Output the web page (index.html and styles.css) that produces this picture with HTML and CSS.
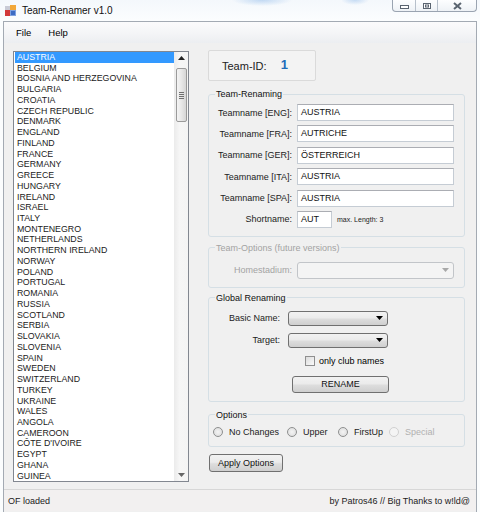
FILE: index.html
```html
<!DOCTYPE html>
<html>
<head>
<meta charset="utf-8">
<title>Team-Renamer v1.0</title>
<link rel="stylesheet" href="styles.css">
</head>
<body>
<div class="titlebar">
  <svg class="appicon" width="11" height="11" viewBox="0 0 11 11">
    <rect x="0" y="1" width="5" height="4" fill="#c9cbd6"/>
    <rect x="5" y="0" width="6" height="5" fill="#f2a83a"/>
    <rect x="0" y="5" width="5" height="6" fill="#d2393a"/>
    <rect x="5" y="5" width="6" height="6" fill="#3d6cc4"/>
    <rect x="5.5" y="5.5" width="5" height="5" fill="none" stroke="#7fa2e0" stroke-width="1"/>
  </svg>
  <span class="title">Team-Renamer v1.0</span>
  <div class="caption">
    <div class="cbtn cmin"><svg width="9" height="5" viewBox="0 0 9 5"><rect x="0.5" y="0.5" width="8" height="3" fill="#fff" stroke="#5a6470"/></svg></div>
    <div class="cbtn cmax"><svg width="8" height="6" viewBox="0 0 8 6"><rect x="0.5" y="0.5" width="7" height="5" fill="#fff" stroke="#5a6470"/><rect x="2.5" y="2" width="3" height="2" fill="none" stroke="#5a6470"/></svg></div>
    <div class="cbtn cclose"><svg width="9" height="8" viewBox="0 0 9 8"><path d="M1 1 L8 7 M8 1 L1 7" stroke="#5a6470" stroke-width="2"/></svg></div>
  </div>
</div>
<div class="client">
  <div class="menubar">
    <span class="menuitem">File</span>
    <span class="menuitem">Help</span>
  </div>
  <div class="main">
    <div class="listbox">
      <div class="items">
        <div class="item sel">AUSTRIA</div>
        <div class="item">BELGIUM</div>
        <div class="item">BOSNIA AND HERZEGOVINA</div>
        <div class="item">BULGARIA</div>
        <div class="item">CROATIA</div>
        <div class="item">CZECH REPUBLIC</div>
        <div class="item">DENMARK</div>
        <div class="item">ENGLAND</div>
        <div class="item">FINLAND</div>
        <div class="item">FRANCE</div>
        <div class="item">GERMANY</div>
        <div class="item">GREECE</div>
        <div class="item">HUNGARY</div>
        <div class="item">IRELAND</div>
        <div class="item">ISRAEL</div>
        <div class="item">ITALY</div>
        <div class="item">MONTENEGRO</div>
        <div class="item">NETHERLANDS</div>
        <div class="item">NORTHERN IRELAND</div>
        <div class="item">NORWAY</div>
        <div class="item">POLAND</div>
        <div class="item">PORTUGAL</div>
        <div class="item">ROMANIA</div>
        <div class="item">RUSSIA</div>
        <div class="item">SCOTLAND</div>
        <div class="item">SERBIA</div>
        <div class="item">SLOVAKIA</div>
        <div class="item">SLOVENIA</div>
        <div class="item">SPAIN</div>
        <div class="item">SWEDEN</div>
        <div class="item">SWITZERLAND</div>
        <div class="item">TURKEY</div>
        <div class="item">UKRAINE</div>
        <div class="item">WALES</div>
        <div class="item">ANGOLA</div>
        <div class="item">CAMEROON</div>
        <div class="item">CÔTE D'IVOIRE</div>
        <div class="item">EGYPT</div>
        <div class="item">GHANA</div>
        <div class="item">GUINEA</div>
      </div>
      <div class="vscroll">
        <div class="arrow"><svg width="7" height="4" viewBox="0 0 7 4"><path d="M0 4 L3.5 0 L7 4 Z" fill="#222"/></svg></div>
        <div class="track">
          <div class="thumb"><span class="grip"></span><span class="grip"></span><span class="grip"></span><span class="grip"></span></div>
        </div>
        <div class="arrow"><svg width="7" height="4" viewBox="0 0 7 4"><path d="M0 0 L3.5 4 L7 0 Z" fill="#666"/></svg></div>
      </div>
    </div>
    <div class="right">
      <div class="idbox">
        <span class="idlabel">Team-ID:</span>
        <span class="idval">1</span>
      </div>
      <fieldset class="group g-rename">
        <legend>Team-Renaming</legend>
        <div class="formgrid">
          <label class="lbl">Teamname [ENG]:</label><div class="tb">AUSTRIA</div>
          <label class="lbl">Teamname [FRA]:</label><div class="tb">AUTRICHE</div>
          <label class="lbl">Teamname [GER]:</label><div class="tb">ÖSTERREICH</div>
          <label class="lbl">Teamname [ITA]:</label><div class="tb">AUSTRIA</div>
          <label class="lbl">Teamname [SPA]:</label><div class="tb">AUSTRIA</div>
          <label class="lbl">Shortname:</label>
          <div class="shortrow"><div class="tb tb-short">AUT</div><span class="hint">max. Length: 3</span></div>
        </div>
      </fieldset>
      <fieldset class="group g-options disabled">
        <legend>Team-Options (future versions)</legend>
        <div class="formgrid">
          <label class="lbl">Homestadium:</label>
          <div class="combo combo-dis"><svg width="7" height="4" viewBox="0 0 7 4"><path d="M0 0 L3.5 4 L7 0 Z" fill="#a8a8a8"/></svg></div>
        </div>
      </fieldset>
      <fieldset class="group g-global">
        <legend>Global Renaming</legend>
        <div class="globalgrid">
          <label class="lbl">Basic Name:</label>
          <div class="combo"><svg width="7" height="4" viewBox="0 0 7 4"><path d="M0 0 L3.5 4 L7 0 Z" fill="#000"/></svg></div>
          <label class="lbl">Target:</label>
          <div class="combo"><svg width="7" height="4" viewBox="0 0 7 4"><path d="M0 0 L3.5 4 L7 0 Z" fill="#000"/></svg></div>
        </div>
        <div class="checkrow"><span class="check"></span><span>only club names</span></div>
        <div class="btn btn-rename">RENAME</div>
      </fieldset>
      <fieldset class="group g-case">
        <legend>Options</legend>
        <div class="radiorow">
          <span class="ropt o1"><span class="radio"></span>No Changes</span>
          <span class="ropt o2"><span class="radio"></span>Upper</span>
          <span class="ropt o3"><span class="radio"></span>FirstUp</span>
          <span class="ropt o4 dis"><span class="radio"></span>Special</span>
        </div>
      </fieldset>
      <div class="btn btn-apply">Apply Options</div>
    </div>
  </div>
  <div class="statusbar">
    <span>OF loaded</span>
    <span>by Patros46 // Big Thanks to w!ld@</span>
  </div>
</div>
</body>
</html>
```
FILE: styles.css
```css
html, body {
  margin: 0;
  padding: 0;
}
body {
  width: 480px;
  height: 512px;
  overflow: hidden;
  font-family: "Liberation Sans", Arial, sans-serif;
  font-size: 9px;
  color: #000;
  background:
    radial-gradient(ellipse 30px 6px at 262px 0px, rgba(150,190,235,0.55), rgba(150,190,235,0) 100%),
    radial-gradient(ellipse 14px 5px at 355px 0px, rgba(150,190,235,0.5), rgba(150,190,235,0) 100%),
    linear-gradient(#f4f8fc, #fbfdfe 20px);
}

/* title bar */
.titlebar {
  height: 21px;
  display: flex;
  align-items: center;
  position: relative;
}
.appicon {
  margin-left: 5px;
  margin-top: -1px;
}
.title {
  margin-left: 6px;
  font-size: 10px;
  color: #111;
  margin-top: -1px;
}
.caption {
  margin-left: auto;
  margin-right: 3px;
  align-self: flex-start;
  display: flex;
  height: 11px;
  border: 1px solid #9aa4b1;
  border-top: none;
  border-radius: 0 0 4px 4px;
  background: linear-gradient(#fdfeff, #eef2f6);
  overflow: hidden;
}
.cbtn {
  display: flex;
  align-items: center;
  justify-content: center;
  height: 11px;
}
.cmin { width: 22px; border-right: 1px solid #b7c0cb; }
.cmin svg { margin-top: 3px; }
.cmax { width: 21px; border-right: 1px solid #b7c0cb; }
.cclose { width: 38px; }

/* client */
.client {
  margin-left: 3px;
  width: 472px;
  height: 490px;
  border: 1px solid #a3aab3;
  border-bottom: none;
  background: #f0f0f0;
  display: flex;
  flex-direction: column;
}
.menubar {
  height: 21px;
  flex: none;
  display: flex;
  align-items: center;
  padding-left: 12px;
  gap: 17px;
  background: linear-gradient(#fbfbfc, #f3f4f6 60%, #eceef1);
}
.menuitem {
  font-size: 9.5px;
}

.main {
  height: 446px;
  flex: none;
  display: flex;
  align-items: flex-start;
  padding-left: 9px;
  box-sizing: border-box;
}

/* listbox */
.listbox {
  margin-top: 8px;
  width: 176px;
  height: 431px;
  box-sizing: border-box;
  border: 1px solid #828790;
  background: #fff;
  display: flex;
  overflow: hidden;
}
.items {
  flex: 1;
  overflow: hidden;
}
.item {
  height: 10.74px;
  line-height: 10.74px;
  padding-left: 2px;
  margin: 0 0 0 1px;
  font-size: 8.8px;
  color: #1b1b1b;
  white-space: nowrap;
}
.item.sel {
  background: #3399ff;
  color: #fff;
}
.vscroll {
  width: 14px;
  flex: none;
  display: flex;
  flex-direction: column;
  background: linear-gradient(90deg, #ebebeb, #f6f6f6 40%, #f4f4f4);
}
.arrow {
  height: 12px;
  flex: none;
  display: flex;
  align-items: center;
  justify-content: center;
}
.track {
  flex: 1;
  padding: 4px 1px 0 2px;
}
.thumb {
  height: 54px;
  box-sizing: border-box;
  border: 1px solid #9a9a9a;
  border-radius: 2px;
  background: linear-gradient(90deg, #f4f4f4, #e7e7e7 50%, #d6d6d6);
  display: flex;
  flex-direction: column;
  align-items: center;
  justify-content: center;
  gap: 1px;
}
.grip {
  width: 5px;
  height: 1px;
  background: #6f6f6f;
}

/* right column */
.right {
  margin-left: 19px;
  width: 257px;
  padding-top: 7px;
}
.idbox {
  width: 108px;
  height: 31px;
  box-sizing: border-box;
  border: 1px solid #dadada;
  border-radius: 2px;
  background: #f3f3f3;
  display: flex;
  align-items: center;
  padding-left: 13px;
}
.idlabel {
  font-size: 11px;
  color: #222;
}
.idval {
  margin-left: 14px;
  font-size: 13px;
  font-weight: bold;
  color: #1f6cba;
  margin-top: -2px;
}

.group {
  margin: 0;
  min-width: 0;
  border: 1px solid #d5dfe5;
  border-radius: 3px;
  padding: 4px 6px 8px 6px;
  box-sizing: border-box;
  width: 257px;
}
.group legend {
  padding: 0 1px;
  font-size: 9px;
  line-height: 12px;
  color: #111;
}
.g-rename { margin-top: 7px; }
.g-options { margin-top: 5px; padding-top: 8px; }
.g-global { margin-top: 4px; padding-top: 7px; }
.g-case { margin-top: 7px; padding-top: 4px; padding-bottom: 7px; }

.disabled legend, .disabled .lbl { color: #a3a3a3; }

.formgrid {
  display: grid;
  grid-template-columns: 77px 157px;
  column-gap: 5px;
  row-gap: 4.4px;
  align-items: center;
}
.lbl {
  text-align: right;
  color: #222;
  white-space: nowrap;
}
.tb {
  height: 17px;
  box-sizing: border-box;
  border: 1px solid #c5ccd4;
  border-top-color: #abadb3;
  background: #fff;
  padding-left: 3px;
  line-height: 15px;
  color: #111;
}
.shortrow {
  display: flex;
  align-items: center;
}
.tb-short { width: 35px; }
.hint {
  margin-left: 5px;
  font-size: 7px;
  color: #222;
  margin-top: 1px;
}

.combo {
  height: 15px;
  box-sizing: border-box;
  border: 1px solid #707070;
  border-radius: 3px;
  background: linear-gradient(#f2f2f2, #ebebeb 45%, #dddddd 55%, #cfcfcf);
  display: flex;
  align-items: center;
  justify-content: flex-end;
  padding-right: 4px;
}
.combo-dis {
  height: 17px;
  border-color: #c2c5c9;
  background: #f4f4f4;
}

.globalgrid {
  display: grid;
  grid-template-columns: 65px 100px;
  column-gap: 8px;
  row-gap: 7px;
  align-items: center;
}
.checkrow {
  margin-top: 8px;
  margin-left: 90px;
  display: flex;
  align-items: center;
  gap: 4px;
  height: 11px;
}
.check {
  width: 10px;
  height: 10px;
  box-sizing: border-box;
  border: 1px solid #8f8f8f;
  background: linear-gradient(135deg, #dcdcdc, #fafafa);
}
.btn {
  box-sizing: border-box;
  border: 1px solid #707070;
  border-radius: 3px;
  background: linear-gradient(#f2f2f2, #ebebeb 45%, #dddddd 55%, #cfcfcf);
  display: flex;
  align-items: center;
  justify-content: center;
  color: #111;
}
.btn-rename {
  margin-top: 9px;
  margin-left: 77px;
  width: 97px;
  height: 17px;
}
.btn-apply {
  margin-top: 7px;
  margin-left: 1px;
  width: 74px;
  height: 18px;
}

.radiorow {
  display: flex;
  align-items: center;
  height: 14px;
  margin-left: -2px;
}
.ropt {
  display: flex;
  align-items: center;
  gap: 6px;
  white-space: nowrap;
  color: #222;
}
.o1 { width: 74px; }
.o2 { width: 51px; }
.o3 { width: 51px; }
.ropt.dis { color: #b0b0b0; }
.radio {
  width: 10px;
  height: 10px;
  box-sizing: border-box;
  border-radius: 50%;
  border: 1px solid #8e8f8f;
  background: radial-gradient(circle at 50% 50%, #f4f4f4, #dadada);
}
.ropt.dis .radio {
  border-color: #d0d0d0;
  background: #f4f4f4;
}

.statusbar {
  height: 22px;
  flex: none;
  box-sizing: border-box;
  border-top: 1px solid #d7d7d7;
  background: #f2f0f0;
  display: flex;
  align-items: center;
  justify-content: space-between;
  padding: 0 6px 0 4px;
  font-size: 9px;
  color: #222;
}
```
